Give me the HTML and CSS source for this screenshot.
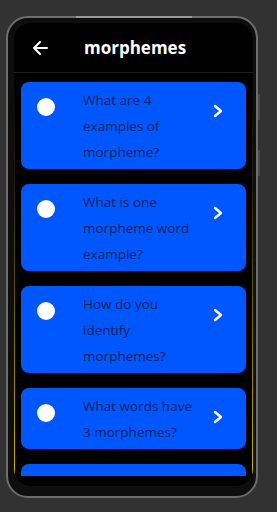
FILE: index.html
```html
<!DOCTYPE html>
<html lang="en">
<head>
  <meta charset="UTF-8">
  <title>morphemes</title>
  <link rel="stylesheet" href="styles.css">
</head>
<body>

  <!-- Marco del telefono -->
  <div class="phone">
    <div class="screen">

      <div class="header">
        <svg class="back" viewBox="0 0 16 16" width="16" height="16">
          <path d="M15 8H2M8 2L2 8L8 14" fill="none" stroke="white" stroke-width="2" stroke-linecap="round" stroke-linejoin="round"/>
        </svg>
        <span class="title">morphemes</span>
      </div>

      <div class="list">
        <div class="card">
          <span class="dot"></span>
          <p class="question">What are 4 examples of morpheme?</p>
          <svg class="chev" viewBox="0 0 14 14" width="14" height="14"><polyline points="4,2 10,7 4,12" fill="none" stroke="white" stroke-width="2.4" stroke-linecap="round" stroke-linejoin="round"/></svg>
        </div>
        <div class="card">
          <span class="dot"></span>
          <p class="question">What is one morpheme word example?</p>
          <svg class="chev" viewBox="0 0 14 14" width="14" height="14"><polyline points="4,2 10,7 4,12" fill="none" stroke="white" stroke-width="2.4" stroke-linecap="round" stroke-linejoin="round"/></svg>
        </div>
        <div class="card">
          <span class="dot"></span>
          <p class="question">How do you identify morphemes?</p>
          <svg class="chev" viewBox="0 0 14 14" width="14" height="14"><polyline points="4,2 10,7 4,12" fill="none" stroke="white" stroke-width="2.4" stroke-linecap="round" stroke-linejoin="round"/></svg>
        </div>
        <div class="card">
          <span class="dot"></span>
          <p class="question">What words have 3 morphemes?</p>
          <svg class="chev" viewBox="0 0 14 14" width="14" height="14"><polyline points="4,2 10,7 4,12" fill="none" stroke="white" stroke-width="2.4" stroke-linecap="round" stroke-linejoin="round"/></svg>
        </div>
        <div class="card">
          <span class="dot"></span>
          <p class="question">What is a bound morpheme?</p>
          <svg class="chev" viewBox="0 0 14 14" width="14" height="14"><polyline points="4,2 10,7 4,12" fill="none" stroke="white" stroke-width="2.4" stroke-linecap="round" stroke-linejoin="round"/></svg>
        </div>
      </div>

    </div>
  </div>

</body>
</html>
```

FILE: styles.css
```css
html, body {
  margin: 0;
  padding: 0;
  background: #323232;
  height: 100%;
  overflow: hidden;
  font-family: "Open Sans", "Noto Sans", sans-serif;
}

.phone {
  position: relative;
  box-sizing: border-box;
  width: 252px;
  height: 482px;
  margin: 16px 0 0 6px;
  padding: 5px 3px 10px 6px;
  border: 2px solid #6e6e6e;
  border-radius: 22px;
  background: #0e0e0e;
}

/* brillo arriba y botones laterales */
.phone::before {
  content: "";
  position: absolute;
  top: -2px;
  left: 68px;
  width: 116px;
  height: 2px;
  background: #9a9a9a;
}

.phone::after {
  content: "";
  position: absolute;
  top: 76px;
  right: -4px;
  width: 2px;
  height: 26px;
  background: #4a4a4a;
  box-shadow: 0 56px 0 #4a4a4a;
}

.screen {
  height: 100%;
  background: #000;
  border-radius: 17px;
  overflow: hidden;
  display: flex;
  flex-direction: column;
  padding-bottom: 10px;
  box-sizing: border-box;
}

.header {
  height: 50px;
  flex-shrink: 0;
  display: flex;
  align-items: center;
  padding-left: 18px;
  border-bottom: 1px solid #1e1e1e;
  box-sizing: border-box;
}

.back {
  margin-right: 36px;
}

.title {
  color: #fff;
  font-weight: 700;
  font-size: 17px;
}

.list {
  flex: 1;
  overflow: hidden;
  padding: 9px 6px 0;
  display: flex;
  flex-direction: column;
  gap: 15px;
  border-left: 1px solid;
  border-right: 1px solid;
  border-top: 0;
  border-bottom: 0;
  border-image: linear-gradient(rgba(200, 180, 0, 0), rgba(200, 180, 0, 0.2) 30%, #c9b400) 1;
}

.card {
  flex-shrink: 0;
  display: flex;
  align-items: flex-start;
  background: #0057ff;
  border-radius: 8px;
  padding: 5px 0 4px;
}

.dot {
  flex-shrink: 0;
  width: 18px;
  height: 18px;
  border-radius: 50%;
  background: #fff;
  margin: 11px 28px 0 16px;
}

.question {
  margin: 0;
  width: 114px;
  color: #0f2160;
  font-size: 13.5px;
  line-height: 26px;
}

.chev {
  margin: 17px 0 0 14px;
}
```
